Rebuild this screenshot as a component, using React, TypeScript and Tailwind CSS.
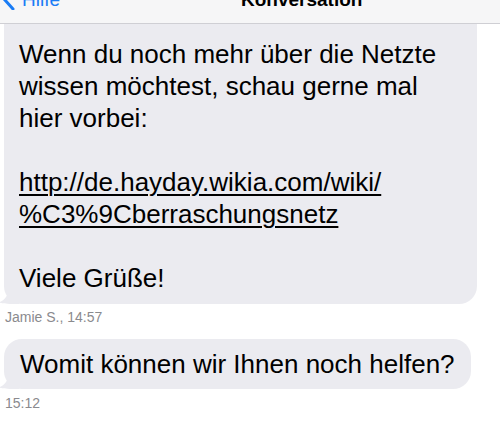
import React from 'react';

const font = { fontFamily: '"Liberation Sans", Arial, sans-serif' };

function Tail() {
  return (
    <svg
      className="absolute bottom-0 left-[-5px] h-[20px] w-[20px]"
      viewBox="0 0 20 20"
      fill="#ebebf0"
    >
      <path d="M9 0 L20 0 L20 20 L11 20 C7 20 3 19.5 0 18.5 C4 17 8 13.5 9 8 Z" />
    </svg>
  );
}

function Bubble({ children, className }: { children: React.ReactNode; className?: string }) {
  return (
    <div className={`relative ml-[4px] bg-[#ebebf0] ${className ?? ''}`}>
      <Tail />
      <div className="relative">{children}</div>
    </div>
  );
}

export default function App() {
  return (
    <div className="h-[421px] w-[500px] overflow-hidden bg-white text-black" style={font}>
      <header className="relative h-[24px] overflow-hidden border-b border-[#cfcfd4] bg-[#f6f6f7]">
        <div className="mt-[-10px] flex items-start">
          <svg className="ml-[3px] mt-[-1px] h-[21px] w-[12px] shrink-0" viewBox="0 0 12 21" fill="none">
            <path d="M10 1 L1.5 10.5 L10 20" stroke="#1a7cf5" strokeWidth="3" strokeLinecap="round" strokeLinejoin="round" />
          </svg>
          <span className="ml-[7px] text-[19px] leading-[19px] text-[#1a7cf5]">Hilfe</span>
          <span className="ml-[181px] text-[19px] font-bold leading-[19px]">Konversation</span>
        </div>
      </header>

      <Bubble className="w-[473px] rounded-b-[18px] pb-[10px] pl-[15px] pt-[14px]">
        <div className="text-[26px] leading-[32px]">
          <div>Wenn du noch mehr über die Netzte</div>
          <div>wissen möchtest, schau gerne mal</div>
          <div>hier vorbei:</div>
          <div>&nbsp;</div>
          <div className="underline decoration-[1.5px] underline-offset-[3px]">http://de.hayday.wikia.com/wiki/</div>
          <div className="underline decoration-[1.5px] underline-offset-[3px]">%C3%9Cberraschungsnetz</div>
          <div>&nbsp;</div>
          <div>Viele Grüße!</div>
        </div>
      </Bubble>
      <div className="ml-[5px] mt-[4px] text-[14px] leading-[18px] text-[#8a8a8e]">Jamie S., 14:57</div>

      <div className="mt-[13px] flex">
        <Bubble className="rounded-[18px] py-[9px] pl-[16px] pr-[16px]">
          <div className="text-[26px] leading-[32px]">Womit können wir Ihnen noch helfen?</div>
        </Bubble>
      </div>
      <div className="ml-[5px] mt-[5px] text-[14px] leading-[18px] text-[#8a8a8e]">15:12</div>
    </div>
  );
}
